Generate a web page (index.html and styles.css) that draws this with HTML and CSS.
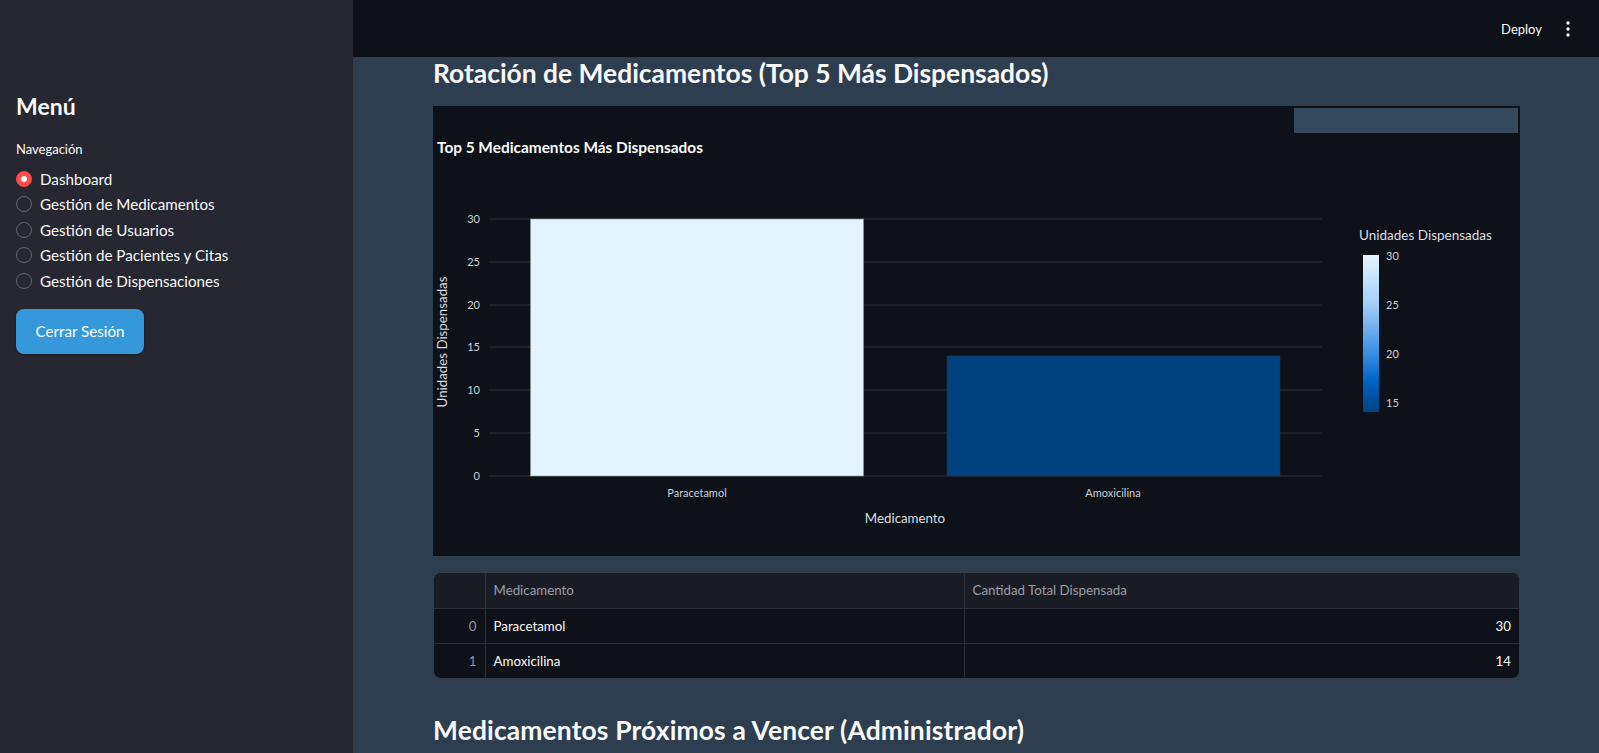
FILE: index.html
```html
<!DOCTYPE html>
<html lang="es">
<head>
<meta charset="utf-8">
<title>Dashboard</title>
<link rel="stylesheet" href="styles.css">
</head>
<body>
<div class="app">
  <aside class="sidebar">
    <h1 class="side-title">Menú</h1>
    <div class="nav-label">Navegación</div>
    <ul class="radio-list">
      <li class="radio active"><span class="dot"></span>Dashboard</li>
      <li class="radio"><span class="dot"></span>Gestión de Medicamentos</li>
      <li class="radio"><span class="dot"></span>Gestión de Usuarios</li>
      <li class="radio"><span class="dot"></span>Gestión de Pacientes y Citas</li>
      <li class="radio"><span class="dot"></span>Gestión de Dispensaciones</li>
    </ul>
    <button class="logout">Cerrar Sesión</button>
  </aside>
  <main class="main">
    <header class="topbar">
      <span class="deploy">Deploy</span>
      <svg class="kebab" width="4" height="16" viewBox="0 0 4 16"><circle cx="2" cy="2" r="1.7" fill="#fafafa"/><circle cx="2" cy="8" r="1.7" fill="#fafafa"/><circle cx="2" cy="14" r="1.7" fill="#fafafa"/></svg>
    </header>
    <section class="content">
      <h2 class="section-title">Rotación de Medicamentos (Top 5 Más Dispensados)</h2>
      <div class="chart">
        <div class="modebar"></div>
        <svg class="chart-svg" width="1087" height="450" viewBox="0 0 1087 450">
          <defs>
            <linearGradient id="blues" x1="0" y1="0" x2="0" y2="1">
              <stop offset="0" stop-color="#e6f4ff"/>
              <stop offset="0.3" stop-color="#a6d1fa"/>
              <stop offset="0.62" stop-color="#3a8fe2"/>
              <stop offset="0.8" stop-color="#0063c6"/>
              <stop offset="1" stop-color="#004282"/>
            </linearGradient>
          </defs>
          <text class="c-title" x="4" y="47">Top 5 Medicamentos Más Dispensados</text>
          <g class="grid">
            <line x1="56" x2="889" y1="113" y2="113"/>
            <line x1="56" x2="889" y1="156" y2="156"/>
            <line x1="56" x2="889" y1="199" y2="199"/>
            <line x1="56" x2="889" y1="241" y2="241"/>
            <line x1="56" x2="889" y1="284" y2="284"/>
            <line x1="56" x2="889" y1="327" y2="327"/>
            <line x1="56" x2="889" y1="370" y2="370"/>
          </g>
          <rect x="97.5" y="113" width="333" height="257" fill="#e3f3ff" stroke="#8d939b" stroke-width="0.6"/>
          <rect x="514" y="250" width="333" height="120" fill="#00427f" stroke="#1f3550" stroke-width="0.6"/>
          <g class="ytick">
            <text x="47" y="117">30</text>
            <text x="47" y="160">25</text>
            <text x="47" y="203">20</text>
            <text x="47" y="245">15</text>
            <text x="47" y="288">10</text>
            <text x="47" y="331">5</text>
            <text x="47" y="374">0</text>
          </g>
          <text class="axis-title" transform="translate(14 236) rotate(-90)">Unidades Dispensadas</text>
          <g class="xtick">
            <text x="264" y="391">Paracetamol</text>
            <text x="680" y="391">Amoxicilina</text>
          </g>
          <text class="axis-title" x="472" y="417">Medicamento</text>
          <text class="cb-title" x="926" y="134">Unidades Dispensadas</text>
          <rect x="930" y="149" width="16" height="157" fill="url(#blues)"/>
          <g class="cbtick">
            <text x="953" y="154">30</text>
            <text x="953" y="203">25</text>
            <text x="953" y="252">20</text>
            <text x="953" y="301">15</text>
          </g>
        </svg>
      </div>
      <div class="table-wrap">
        <table class="data">
          <thead>
            <tr><th class="idx"></th><th class="c1">Medicamento</th><th class="c2">Cantidad Total Dispensada</th></tr>
          </thead>
          <tbody>
            <tr><td class="idx">0</td><td>Paracetamol</td><td class="num">30</td></tr>
            <tr><td class="idx">1</td><td>Amoxicilina</td><td class="num">14</td></tr>
          </tbody>
        </table>
      </div>
      <h2 class="section-title second">Medicamentos Próximos a Vencer (Administrador)</h2>
    </section>
  </main>
</div>
</body>
</html>
```
FILE: styles.css
```css
* { box-sizing: border-box; }
html, body { margin: 0; padding: 0; }
body {
  font-family: Lato, "Noto Sans", sans-serif;
  color: #fafafa;
  background: #2c3e50;
}
.app {
  display: flex;
  height: 753px;
  overflow: hidden;
}
.sidebar {
  width: 353px;
  flex: 0 0 353px;
  background: #262730;
  padding: 90px 16px 0 16px;
}
.side-title {
  margin: 0;
  font-size: 23px;
  font-weight: 700;
  line-height: 32px;
}
.nav-label {
  margin-top: 17px;
  font-size: 13px;
  line-height: 20px;
  color: #fafafa;
}
.radio-list {
  list-style: none;
  margin: 7px 0 0 0;
  padding: 0;
}
.radio {
  display: flex;
  align-items: center;
  height: 25px;
  font-size: 15.2px;
  margin-bottom: 0.5px;
}
.dot {
  width: 16px;
  height: 16px;
  border-radius: 50%;
  border: 1px solid #62646c;
  margin-right: 8px;
  flex: 0 0 16px;
}
.radio.active .dot {
  background: #ff4b4b;
  border-color: #ff4b4b;
  position: relative;
}
.radio.active .dot::after {
  content: "";
  position: absolute;
  left: 4px;
  top: 4px;
  width: 6px;
  height: 6px;
  border-radius: 50%;
  background: #fff;
}
.logout {
  margin-top: 15px;
  width: 128px;
  height: 45px;
  border: none;
  border-radius: 8px;
  background: #3498db;
  color: #ffffff;
  font-family: Lato, "Noto Sans", sans-serif;
  font-size: 15.2px;
  box-shadow: 0 1px 3px rgba(0,0,0,0.35);
}
.main {
  flex: 1;
  display: flex;
  flex-direction: column;
  min-width: 0;
}
.topbar {
  height: 57px;
  flex: 0 0 57px;
  background: #0e1117;
  display: flex;
  align-items: center;
  justify-content: flex-end;
  padding-right: 29px;
}
.deploy {
  font-size: 13px;
  margin-right: 24px;
}
.kebab { display: block; }
.content {
  padding: 0 79px 0 80px;
}
.section-title {
  margin: 0 0 17px 0;
  font-size: 26.4px;
  font-weight: 700;
  line-height: 32px;
  letter-spacing: 0;
}
.section-title.second {
  margin-top: 35px;
  letter-spacing: 0.15px;
}
.chart {
  position: relative;
  height: 450px;
  background: #0e1117;
}
.modebar {
  position: absolute;
  left: 861px;
  top: 2px;
  width: 224px;
  height: 25px;
  background: #34495e;
}
.chart-svg { display: block; }
.c-title {
  font-size: 15.4px;
  font-weight: 700;
  fill: #fafafa;
}
.grid line { stroke: #2d3039; stroke-width: 1; }
.ytick text {
  font-size: 11px;
  fill: #d0d2d6;
  text-anchor: end;
}
.xtick text {
  font-size: 11px;
  fill: #d0d2d6;
  text-anchor: middle;
}
.axis-title {
  font-size: 13.3px;
  fill: #dcdde0;
  text-anchor: middle;
}
.cb-title {
  font-size: 13.5px;
  fill: #dcdde0;
}
.cbtick text {
  font-size: 11px;
  fill: #d0d2d6;
}
.table-wrap {
  margin-top: 16px;
  border: 1px solid #363a45;
  border-radius: 8px;
  overflow: hidden;
  background: #0e1117;
}
.data {
  width: 100%;
  border-collapse: collapse;
  font-size: 13.3px;
}
.data th {
  height: 35px;
  background: #1a1c23;
  color: #9a9ea8;
  font-weight: 400;
  text-align: left;
  padding: 0 8px;
  border-bottom: 1px solid #2e313a;
}
.data td {
  height: 35px;
  padding: 0 8px;
  color: #fafafa;
  border-bottom: 1px solid #2a2d35;
}
.data tbody tr:last-child td { border-bottom: none; }
.data th + th, .data td + td { border-left: 1px solid #2e313a; }
.data .idx {
  width: 51px;
  text-align: right;
  color: #8f949e;
}
.data .c1 { width: 479px; }
.data .num { text-align: right; }
```
